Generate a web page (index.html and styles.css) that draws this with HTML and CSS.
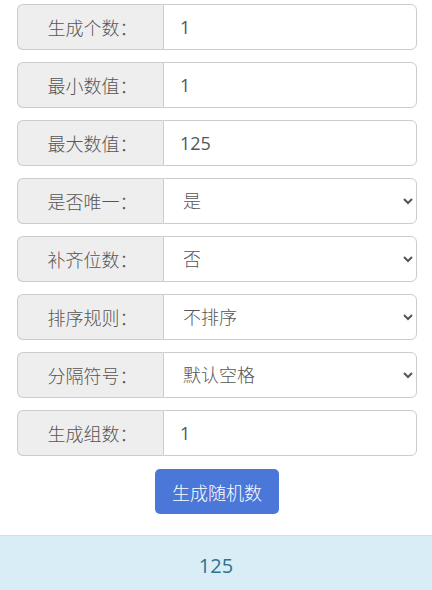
FILE: index.html
```html
<!DOCTYPE html>
<html lang="zh-CN">
<head>
<meta charset="utf-8">
<title>随机数生成</title>
<link rel="stylesheet" href="styles.css">
</head>
<body>
<div class="form">
  <div class="group"><span class="addon">生成个数：</span><input class="ctrl" type="text" value="1"></div>
  <div class="group"><span class="addon">最小数值：</span><input class="ctrl" type="text" value="1"></div>
  <div class="group"><span class="addon">最大数值：</span><input class="ctrl" type="text" value="125"></div>
  <div class="group"><span class="addon">是否唯一：</span><select class="ctrl"><option>是</option><option>否</option></select></div>
  <div class="group"><span class="addon">补齐位数：</span><select class="ctrl"><option>否</option><option>是</option></select></div>
  <div class="group"><span class="addon">排序规则：</span><select class="ctrl"><option>不排序</option><option>升序</option><option>降序</option></select></div>
  <div class="group"><span class="addon">分隔符号：</span><select class="ctrl"><option>默认空格</option><option>逗号</option></select></div>
  <div class="group"><span class="addon">生成组数：</span><input class="ctrl" type="text" value="1"></div>
  <div class="actions"><button class="btn" type="button">生成随机数</button></div>
</div>
<div class="result">125</div>
</body>
</html>
```
FILE: styles.css
```css
* { box-sizing: border-box; }
html, body { margin: 0; padding: 0; background: #fff; }
body {
  font-family: "Open Sans", "Noto Sans CJK SC", sans-serif;
  color: #555;
}
.form {
  padding: 4px 15px 0 17px;
  display: flex;
  flex-direction: column;
  gap: 12px;
}
.group {
  display: flex;
  height: 46px;
}
.addon {
  width: 146px;
  flex: none;
  display: flex;
  align-items: center;
  justify-content: center;
  padding-left: 4px;
  background: #eee;
  border: 1px solid #ccc;
  border-right: 0;
  border-radius: 6px 0 0 6px;
  font-size: 18px;
  font-weight: 300;
  color: #555;
  font-family: "Noto Sans CJK SC", sans-serif;
}
.ctrl {
  flex: 1;
  min-width: 0;
  height: 46px;
  margin: 0;
  border: 1px solid #ccc;
  border-radius: 0 6px 6px 0;
  padding: 0 16px;
  font-family: "Open Sans", "Noto Sans CJK SC", sans-serif;
  font-size: 18px;
  font-weight: 400;
  color: #555;
  background-color: #fff;
  outline: none;
}
select.ctrl { padding: 0 15px; font-weight: 300; }
.actions {
  display: flex;
  justify-content: center;
  padding: 1px 0 21px;
}
.btn {
  width: 124px;
  height: 45px;
  border: 0;
  border-radius: 5px;
  background: #4a77d8;
  color: #fff;
  font-family: "Noto Sans CJK SC", sans-serif;
  font-size: 18px;
  font-weight: 300;
  padding: 0;
}
.result {
  height: 56px;
  background: #d9edf7;
  border-top: 1px solid #bce8f1;
  color: #31708f;
  font-size: 20px;
  display: flex;
  align-items: center;
  justify-content: center;
  padding-top: 3px;
}
```
